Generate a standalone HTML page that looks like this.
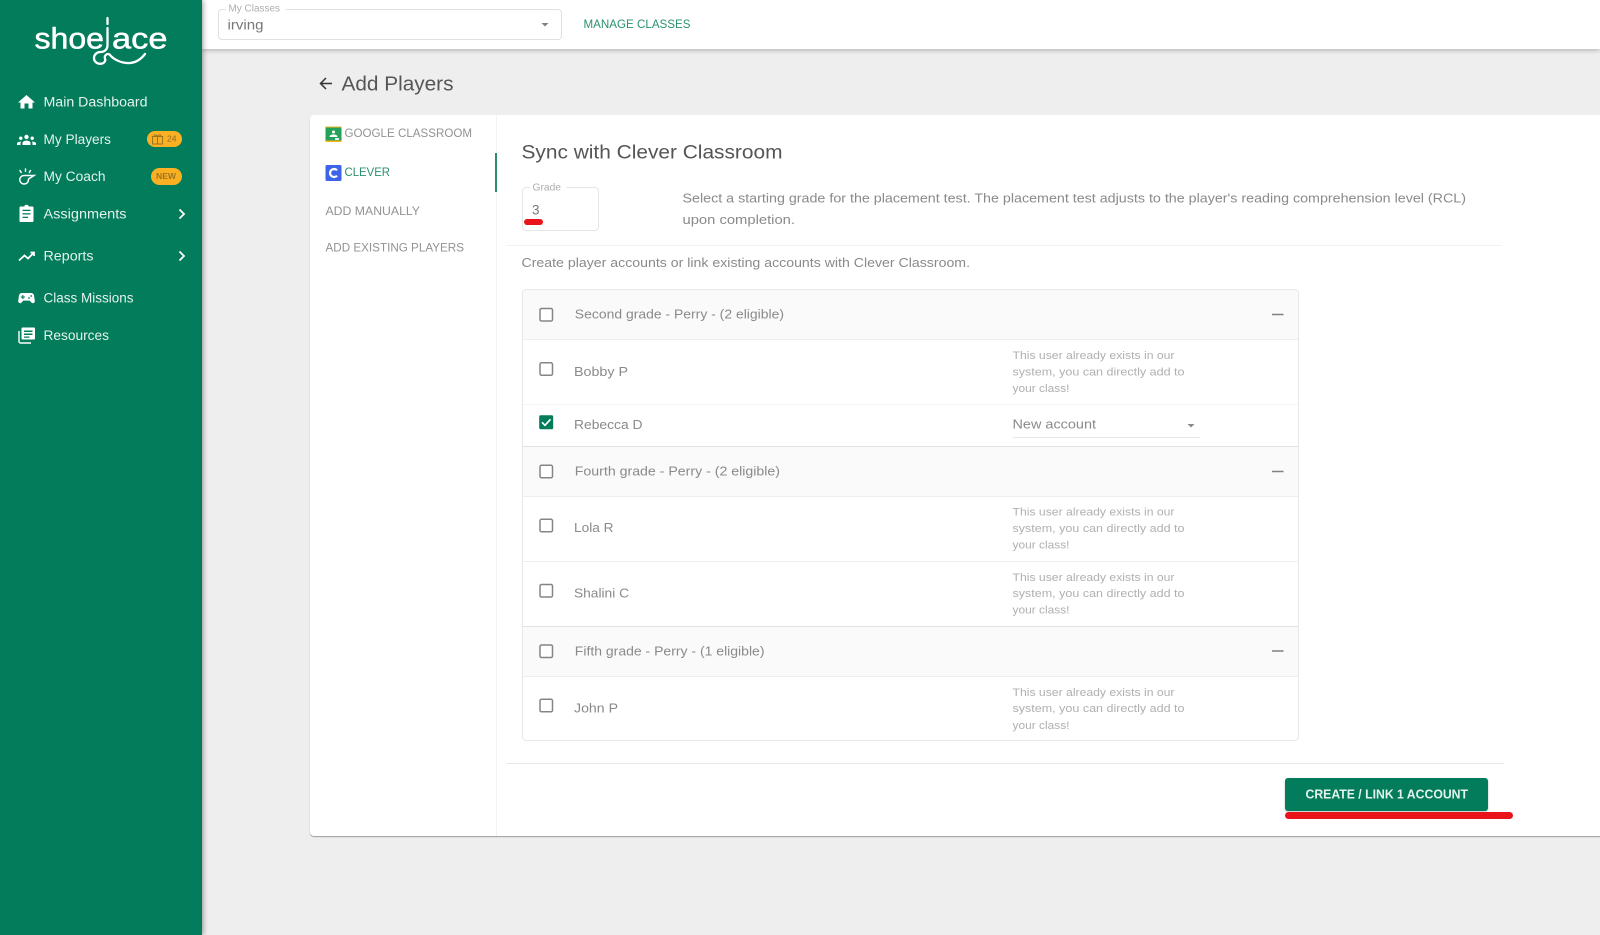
<!DOCTYPE html>
<html><head><meta charset="utf-8"><title>Add Players</title>
<style>
html,body{margin:0;padding:0;width:1600px;height:935px;overflow:hidden;background:#eee;font-family:"Liberation Sans",sans-serif}
.a{position:absolute;box-sizing:border-box}
svg{position:absolute;left:0;top:0}
text{font-family:"Liberation Sans",sans-serif}
</style></head><body>
<div class="a" style="left:202px;top:0;width:1398px;height:49px;background:#fff;box-shadow:0 1px 5px rgba(0,0,0,.28)"></div>
<div class="a" style="left:0;top:0;width:202px;height:935px;background:#027c5b;box-shadow:1px 0 5px rgba(0,0,0,.4)"></div>
<div class="a" style="left:217.5px;top:8.500px;width:344px;height:31px;border:1px solid #e0e0e0;border-radius:4px"></div>
<div class="a" style="left:226px;top:4px;width:60px;height:8px;background:#fff"></div>
<div class="a" style="left:309.5px;top:114.500px;width:1291px;height:721.500px;background:#fff;border-radius:4px 0 0 4px;box-shadow:0 1px 1px rgba(0,0,0,.35)"></div>
<div class="a" style="left:496px;top:114.500px;width:1px;height:721px;background:#f3f3f3"></div>
<div class="a" style="left:495px;top:153px;width:2px;height:39px;background:#2a8c6c"></div>
<div class="a" style="left:521.800px;top:187px;width:77.500px;height:44px;border:1px solid #e6e6e6;border-radius:4px"></div>
<div class="a" style="left:530px;top:183px;width:36px;height:8px;background:#fff"></div>
<div class="a" style="left:524px;top:219px;width:18.500px;height:6px;background:#e8141a;border-radius:3px"></div>
<div class="a" style="left:506px;top:245px;width:996px;height:1px;background:#f2f2f2"></div>
<div class="a" style="left:521.700px;top:289px;width:777.300px;height:452px;border:1px solid #e8e8e8;border-radius:4px;overflow:hidden">
<div class="a" style="left:0;top:0;width:100%;height:50px;background:#fafafa;border-bottom:1px solid #eee"></div>
<div class="a" style="left:0;top:50px;width:100%;height:65px;border-bottom:1px solid #f3f3f3"></div>
<div class="a" style="left:0;top:156px;width:100%;height:51px;background:#fafafa;border-top:1px solid #e2e2e2;border-bottom:1px solid #eee"></div>
<div class="a" style="left:0;top:207px;width:100%;height:65px;border-bottom:1px solid #f0f0f0"></div>
<div class="a" style="left:0;top:336px;width:100%;height:51px;background:#fafafa;border-top:1px solid #e2e2e2;border-bottom:1px solid #eee"></div>
</div>
<div class="a" style="left:1012.500px;top:437px;width:187.500px;height:1px;background:#e8e8e8"></div>
<div class="a" style="left:506px;top:763px;width:998px;height:1px;background:#e8e8e8"></div>
<div class="a" style="left:1285px;top:778px;width:203px;height:33px;background:#027c5b;border-radius:3px;box-shadow:0 1px 2px rgba(0,0,0,.25)"></div>
<div class="a" style="left:1284.500px;top:812px;width:228px;height:7px;background:#e8141a;border-radius:4px"></div>

<svg width="1600" height="935" viewBox="0 0 1600 935" xmlns="http://www.w3.org/2000/svg">
<!-- logo -->
<g fill="#fff" stroke="#fff" stroke-width=".5">
<text x="34.500" y="48.500" font-size="29.500" textLength="69.500" lengthAdjust="spacingAndGlyphs">shoe</text>
<text x="112" y="48.500" font-size="29.500" textLength="55.500" lengthAdjust="spacingAndGlyphs">ace</text>
</g>
<path d="M107.500 18V24M107.500 28V45C107.500 49.500 104.500 52 100.500 52C96.500 52 94 55 94 58C94 61.500 97 63.800 100.500 63.800C104 63.800 106 61 105 58.500C104 55.500 107 53 109.500 54.500C114 60 122 63.500 130 63C137 62.500 141.500 58.500 145 54" fill="none" stroke="#fff" stroke-width="2.300" stroke-linecap="round"/>

<!-- nav text -->
<g fill="#e4f2ed" font-size="13.500">
<text x="43.500" y="106.500" textLength="104" lengthAdjust="spacingAndGlyphs">Main Dashboard</text>
<text x="43.500" y="144" textLength="67.500" lengthAdjust="spacingAndGlyphs">My Players</text>
<text x="43.500" y="181" textLength="62" lengthAdjust="spacingAndGlyphs">My Coach</text>
<text x="43.500" y="218.500" textLength="83" lengthAdjust="spacingAndGlyphs">Assignments</text>
<text x="43.500" y="260.500" textLength="50" lengthAdjust="spacingAndGlyphs">Reports</text>
<text x="43.500" y="302.500" textLength="90" lengthAdjust="spacingAndGlyphs">Class Missions</text>
<text x="43.500" y="340" textLength="65.500" lengthAdjust="spacingAndGlyphs">Resources</text>
</g>
<!-- nav icons -->
<g fill="#fff">
<path d="M26.500 95L18 102.500H20.500V108.500H24.500V103.500H28.500V108.500H32.500V102.500H35Z"/>
<g>
<circle cx="26.500" cy="137" r="2.200"/><path d="M22.500 145v-2c0-1.500 2-2.400 4-2.400s4 .9 4 2.400v2z"/>
<circle cx="20.800" cy="138.200" r="1.700"/><path d="M17 145v-1.400c0-1.300 1.700-2 4.300-2-.5.400-.8 1-.8 1.700V145z"/>
<circle cx="32.200" cy="138.200" r="1.700"/><path d="M36 145v-1.400c0-1.300-1.700-2-4.300-2 .5.400.8 1 .8 1.700V145z"/>
</g>
<path d="M19.500 207.500a1 1 0 0 1 1-1h3.700a2.400 2.400 0 0 1 4.600 0h3.700a1 1 0 0 1 1 1v13.500a1 1 0 0 1-1 1h-12a1 1 0 0 1-1-1zM22.500 211h8v-1.300h-8zM22.500 214.500h8v-1.300h-8zM22.500 218h5.500v-1.300h-5.500z" fill-rule="evenodd"/>
<path d="M22 293h9c1.800 0 2.800 1.200 3.100 2.700l.7 5.300c.2 1.800-2 3-3.300 1.600l-1.800-2h-6.400l-1.800 2c-1.300 1.400-3.500.2-3.300-1.600l.7-5.300c.3-1.500 1.300-2.700 3.100-2.700z M22.300 295v1.500h-1.500v1.100h1.500v1.500h1.100v-1.500h1.500v-1.100h-1.500V295z" fill-rule="evenodd"/>
<circle cx="29" cy="298" r=".9" fill="#027c5b"/><circle cx="31.200" cy="296" r=".9" fill="#027c5b"/>
<path d="M22.500 327.500H34a1 1 0 0 1 1 1v10a1 1 0 0 1-1 1H22.500a1 1 0 0 1-1-1v-10a1 1 0 0 1 1-1zM24 330.500V332h8.500v-1.500zM24 333.500V335h8.500v-1.500zM24 336.500v1.300h5.500v-1.300z" fill-rule="evenodd"/>
</g>
<path d="M19 331v10.500a1.500 1.500 0 0 0 1.500 1.500H31" fill="none" stroke="#fff" stroke-width="1.400"/>
<path d="M19 260.500L24.500 255.500L28 258.500L34 252.500M30.500 252.500H34V256" fill="none" stroke="#fff" stroke-width="1.800"/>
<g fill="none" stroke="#fff" stroke-width="1.500" stroke-linecap="round">
<path d="M24.500 175.500H34L28.500 179C28.500 182.500 26.500 184 24 184A4.200 4.200 0 0 1 24 175.500"/>
<path d="M20 170.500l1.200 2M25.500 169v2.200M30.500 170.500l-1.200 2"/>
</g>
<g fill="none" stroke="#fff" stroke-width="1.800"><path d="M179.500 209.500L184 214L179.500 218.500"/><path d="M179.500 251.500L184 256L179.500 260.500"/></g>
<!-- badges -->
<rect x="147" y="131" width="35" height="16" rx="8" fill="#fbb024"/>
<rect x="151" y="168" width="31" height="17" rx="8.500" fill="#fbb024"/>
<g fill="none" stroke="#9a7620" stroke-width="1"><rect x="152.500" y="136.500" width="10" height="7.500"/><path d="M151.800 136.500h11.400M157.500 136.500v7.500M157.500 136.500c-2-2.500-4-2-3 0M157.500 136.500c2-2.500 4-2 3 0"/></g>
<text x="167" y="141.500" font-size="8" fill="#8a6a20" textLength="9.500" lengthAdjust="spacingAndGlyphs">24</text>
<text x="156" y="179" font-size="8" font-weight="bold" fill="#9a7620" textLength="20" lengthAdjust="spacingAndGlyphs">NEW</text>

<!-- top bar -->
<text x="228.500" y="11.500" font-size="10" fill="#adadad" textLength="51.500" lengthAdjust="spacingAndGlyphs">My Classes</text>
<text x="227.500" y="29.500" font-size="13.500" fill="#777" textLength="36" lengthAdjust="spacingAndGlyphs">irving</text>
<path d="M541.500 23h7l-3.500 3.500z" fill="#808080"/>
<text x="583.500" y="28" font-size="11.500" fill="#2a916d" textLength="107" lengthAdjust="spacingAndGlyphs">MANAGE CLASSES</text>

<!-- title -->
<path d="M332 83.500H321M326 78L320.500 83.500L326 89" fill="none" stroke="#333" stroke-width="1.500"/>
<text x="341.500" y="90.500" font-size="20" fill="#555" textLength="112" lengthAdjust="spacingAndGlyphs">Add Players</text>

<!-- left nav -->
<rect x="325.500" y="126.500" width="16" height="15.500" fill="#f7b520"/>
<rect x="325.500" y="127.500" width="16" height="13" fill="#25a25a"/>
<circle cx="333.500" cy="132" r="1.500" fill="#fff"/><path d="M329.500 137c0-2 2-2.500 4-2.500s4 .5 4 2.500z" fill="#fff"/>
<rect x="335" y="138" width="4" height="2" fill="#eee"/>
<rect x="325.500" y="165" width="16" height="16" rx="1.500" fill="#3d63ea"/>
<path d="M337 170.300A4 4 0 1 0 337 175.700" fill="none" stroke="#fff" stroke-width="2.200"/>
<g font-size="11.500" fill="#929292">
<text x="344.500" y="137" textLength="127.500" lengthAdjust="spacingAndGlyphs">GOOGLE CLASSROOM</text>
<text x="344.500" y="176" fill="#2a916d" textLength="45.500" lengthAdjust="spacingAndGlyphs">CLEVER</text>
<text x="325.500" y="215" textLength="94.500" lengthAdjust="spacingAndGlyphs">ADD MANUALLY</text>
<text x="325.500" y="251.500" textLength="138.500" lengthAdjust="spacingAndGlyphs">ADD EXISTING PLAYERS</text>
</g>

<!-- content header -->
<text x="521.500" y="158.500" font-size="19" fill="#555" textLength="261" lengthAdjust="spacingAndGlyphs">Sync with Clever Classroom</text>
<text x="532.500" y="190.500" font-size="10" fill="#adadad" textLength="28.500" lengthAdjust="spacingAndGlyphs">Grade</text>
<text x="532" y="214.500" font-size="13.500" fill="#777">3</text>
<g font-size="13" fill="#8a8a8a">
<text x="682.500" y="202.500" textLength="783.500" lengthAdjust="spacingAndGlyphs">Select a starting grade for the placement test. The placement test adjusts to the player's reading comprehension level (RCL)</text>
<text x="682.500" y="224" textLength="112.500" lengthAdjust="spacingAndGlyphs">upon completion.</text>
<text x="521.500" y="267" textLength="448.500" lengthAdjust="spacingAndGlyphs">Create player accounts or link existing accounts with Clever Classroom.</text>
<text x="574.800" y="318.500" textLength="209.200" lengthAdjust="spacingAndGlyphs">Second grade - Perry - (2 eligible)</text>
<text x="574.800" y="475.500" textLength="205.200" lengthAdjust="spacingAndGlyphs">Fourth grade - Perry - (2 eligible)</text>
<text x="574.800" y="655.500" textLength="189.700" lengthAdjust="spacingAndGlyphs">Fifth grade - Perry - (1 eligible)</text>
<text x="574" y="376" textLength="54" lengthAdjust="spacingAndGlyphs">Bobby P</text>
<text x="574" y="429" textLength="68.500" lengthAdjust="spacingAndGlyphs">Rebecca D</text>
<text x="574" y="532" textLength="39.500" lengthAdjust="spacingAndGlyphs">Lola R</text>
<text x="574" y="597.500" textLength="55" lengthAdjust="spacingAndGlyphs">Shalini C</text>
<text x="574" y="712.500" textLength="44" lengthAdjust="spacingAndGlyphs">John P</text>
<text x="1012.500" y="428.500" textLength="83.500" lengthAdjust="spacingAndGlyphs">New account</text>
</g>
<path d="M1187.500 424h7l-3.500 3.500z" fill="#8a8a8a"/>
<g font-size="11" fill="#b0b0b0">
<text x="1012.500" y="359" textLength="162" lengthAdjust="spacingAndGlyphs">This user already exists in our</text>
<text x="1012.500" y="375.500" textLength="172" lengthAdjust="spacingAndGlyphs">system, you can directly add to</text>
<text x="1012.500" y="392" textLength="57" lengthAdjust="spacingAndGlyphs">your class!</text>
<text x="1012.500" y="515.500" textLength="162" lengthAdjust="spacingAndGlyphs">This user already exists in our</text>
<text x="1012.500" y="532" textLength="172" lengthAdjust="spacingAndGlyphs">system, you can directly add to</text>
<text x="1012.500" y="548.500" textLength="57" lengthAdjust="spacingAndGlyphs">your class!</text>
<text x="1012.500" y="581" textLength="162" lengthAdjust="spacingAndGlyphs">This user already exists in our</text>
<text x="1012.500" y="597" textLength="172" lengthAdjust="spacingAndGlyphs">system, you can directly add to</text>
<text x="1012.500" y="613.500" textLength="57" lengthAdjust="spacingAndGlyphs">your class!</text>
<text x="1012.500" y="696" textLength="162" lengthAdjust="spacingAndGlyphs">This user already exists in our</text>
<text x="1012.500" y="712" textLength="172" lengthAdjust="spacingAndGlyphs">system, you can directly add to</text>
<text x="1012.500" y="729" textLength="57" lengthAdjust="spacingAndGlyphs">your class!</text>
</g>
<!-- checkboxes -->
<g fill="#fff" stroke="#858585" stroke-width="1.500">
<rect x="540" y="308.500" width="12.500" height="12.500" rx="1.500"/>
<rect x="540" y="362.800" width="12.500" height="12.500" rx="1.500"/>
<rect x="540" y="465.300" width="12.500" height="12.500" rx="1.500"/>
<rect x="540" y="519.300" width="12.500" height="12.500" rx="1.500"/>
<rect x="540" y="584.500" width="12.500" height="12.500" rx="1.500"/>
<rect x="540" y="645" width="12.500" height="12.500" rx="1.500"/>
<rect x="540" y="699.300" width="12.500" height="12.500" rx="1.500"/>
</g>
<rect x="539.200" y="415.300" width="14" height="14" rx="1.500" fill="#027c5b"/>
<path d="M542 422.300L545 425.300L550.500 419.300" fill="none" stroke="#fff" stroke-width="1.700"/>
<!-- minus -->
<g stroke="#808080" stroke-width="1.400"><path d="M1272 314.500h11.500M1272 471.500h11.500M1272 651h11.500"/></g>
<!-- button -->
<text x="1305.500" y="798.500" font-size="13" font-weight="bold" fill="#e4f2ed" textLength="162.500" lengthAdjust="spacingAndGlyphs">CREATE / LINK 1 ACCOUNT</text>
</svg>
</body></html>
